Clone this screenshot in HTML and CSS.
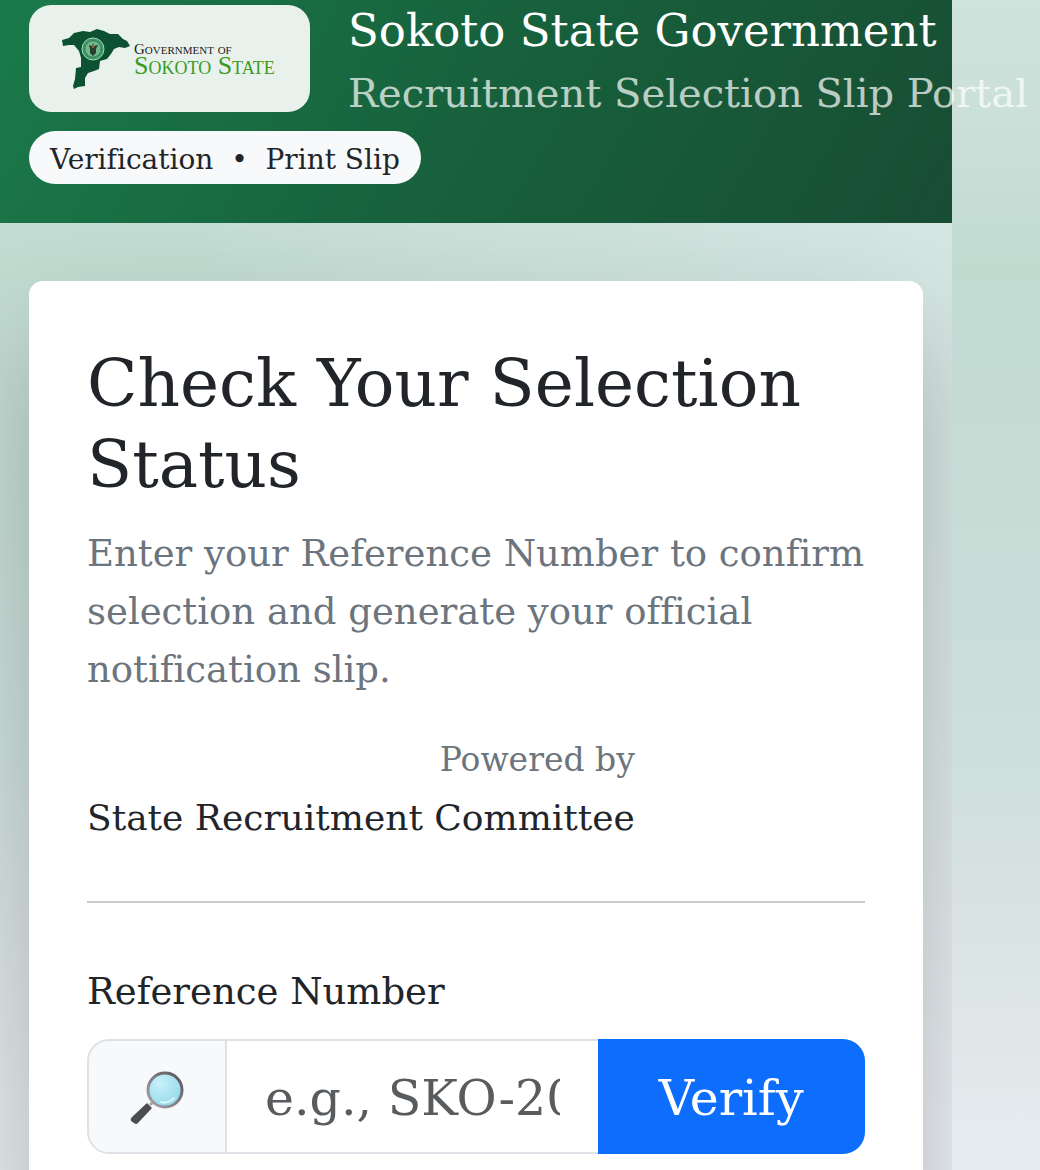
FILE: index.html
```html
<!DOCTYPE html>
<html lang="en">

<head>
    <meta charset="UTF-8">
    <meta name="viewport" content="width=device-width, initial-scale=1.0">
    <title>Sokoto State Government - Recruitment Selection Slip Portal</title>
    <link rel="stylesheet" href="styles.css">
</head>

<body>
    <div class="page">
        <header class="topbar">
            <div class="brand">
                <div class="logo">
                    <svg class="logo-map" viewBox="0 0 70 62" aria-hidden="true">
                        <path fill="#0b5132" d="M1 12 L8 10 L13 5 L22 3 L29 4 L36 1 L43 3 L49 6 L57 6 L62 11 L66 13 L69 18 L64 20 L58 19 L53 21 L50 26 L46 31 L39 33 L38 41 L33 43 L27 45 L24 50 L24 58 L17 59 L13 61 L12 58 L14 51 L15 40 L20 39 L20 30 L18 23 L13 17 L8 17 L2 18 Z" />
                        <circle cx="32" cy="21" r="11" fill="#3f9568" stroke="#a4d8b5" stroke-width="1" />
                        <circle cx="32" cy="21" r="8" fill="#6fb98c" stroke="#28754b" stroke-width="1" stroke-dasharray="2 1" />
                        <path fill="#25402f" d="M28 17 L31 18 L32 15 L33 18 L37 17 L35 21 L35 25 L32 28 L29 25 L29 21 Z" />
                        <path fill="#a55b43" d="M31 17 h2 v3 h-2 Z" />
                    </svg>
                    <div class="logo-text">
                        <span class="logo-gov">Government of</span>
                        <span class="logo-state">Sokoto State</span>
                    </div>
                </div>
                <div class="brand-text">
                    <div class="brand-title">Sokoto State Government</div>
                    <div class="brand-sub">Recruitment Selection Slip Portal</div>
                </div>
            </div>
            <div class="badge">Verification &nbsp;•&nbsp; Print Slip</div>
        </header>

        <main>
            <div class="card">
                <h1>Check Your Selection Status</h1>
                <p class="lead">Enter your Reference Number to confirm selection and generate your official notification slip.</p>
                <div class="powered">
                    <div class="powered-label">Powered by</div>
                    <div>State Recruitment Committee</div>
                </div>
                <hr>
                <form>
                    <label for="reference">Reference Number</label>
                    <div class="input-group">
                        <span class="input-icon">
                            <svg viewBox="0 0 56 56" aria-hidden="true">
                                <defs>
                                    <radialGradient id="glass" cx="35%" cy="30%" r="75%">
                                        <stop offset="0" stop-color="#c9f1fb" />
                                        <stop offset="1" stop-color="#93d9ea" />
                                    </radialGradient>
                                    <linearGradient id="rim" x1="0" y1="1" x2="1" y2="0">
                                        <stop offset="0" stop-color="#a9a5ad" />
                                        <stop offset="1" stop-color="#55535a" />
                                    </linearGradient>
                                </defs>
                                <path d="M21 36 L26 31" stroke="#aaa8ae" stroke-width="3" />
                                <path d="M18 34 L23 39 L9 54 Q7 56 5 54 L2 52 Q1 50 3 48 Z" fill="#4b4d50" />
                                <circle cx="36" cy="21" r="17" fill="url(#glass)" stroke="url(#rim)" stroke-width="3" />
                                <path d="M32 33 Q39 35 45 29" fill="none" stroke="#d8f6fc" stroke-width="2" stroke-linecap="round" />
                            </svg>
                        </span>
                        <input type="text" id="reference" name="reference" placeholder="e.g., SKO-2026-0001">
                        <button type="submit">Verify</button>
                    </div>
                </form>
            </div>
        </main>
    </div>
</body>

</html>
```
FILE: styles.css
```css
* {
    box-sizing: border-box;
}

body {
    margin: 0;
    font-family: "DejaVu Serif", serif;
    font-size: 36px;
    font-variant-ligatures: none;
    line-height: 58px;
    color: #212529;
    background: linear-gradient(180deg, #cfe3dd 0, #c9dfd7 150px, #c1dbd1 260px, #c6dcd5 500px, #cddfdc 750px, #d8e2e2 900px, #e4eaed 1120px);
    overflow-x: hidden;
}

.page {
    width: 91.5%;
    min-height: 100vh;
}

/* header */
.topbar {
    position: relative;
    padding: 5px 29px 39px;
    background: linear-gradient(120deg, #1b7a4b, #17633d 45%, #184d33);
}

.brand {
    display: flex;
    gap: 38px;
    margin-bottom: 2px;
}

.logo {
    flex: none;
    display: flex;
    align-items: center;
    gap: 3px;
    width: 281px;
    height: 107px;
    padding: 0 32px;
    border-radius: 22px;
    background: #e9f1ed;
}

.logo-map {
    flex: none;
    width: 70px;
    height: 62px;
}

.logo-text {
    display: flex;
    flex-direction: column;
    font-family: "Liberation Serif", serif;
    font-variant: small-caps;
    white-space: nowrap;
}

.logo-gov {
    font-size: 15px;
    line-height: 14px;
    color: #222;
}

.logo-state {
    font-size: 26px;
    line-height: 20px;
    color: #3a9a22;
}

.brand-text {
    white-space: nowrap;
    color: #fff;
}

.brand-title {
    font-size: 45px;
    line-height: 52px;
}

.brand-sub {
    font-size: 40px;
    line-height: 72px;
    opacity: 0.7;
}

.badge {
    width: fit-content;
    padding: 4px 21px 0;
    border-radius: 27px;
    background: #f8f9fa;
    font-size: 28px;
    line-height: 49px;
}

/* card */
main {
    padding: 58px 29px 0;
    overflow: hidden;
    background: linear-gradient(90deg, rgba(240, 243, 250, 0) 20%, rgba(240, 243, 250, 0.4));
}

.card {
    padding: 58px;
    border-radius: 14px 14px 0 0;
    background: #fff;
    box-shadow: 0 58px 110px rgba(0, 0, 0, 0.22);
}

h1 {
    margin: 4px 0 20px;
    font-size: 66px;
    font-weight: 400;
    line-height: 81px;
}

.lead {
    margin: 0 0 32px;
    font-size: 37px;
    color: #6c757d;
}

.powered {
    width: fit-content;
    text-align: right;
}

.powered-label {
    font-size: 33px;
    color: #6c757d;
}

hr {
    margin: 54px 0 60px;
    border: 0;
    border-top: 2px solid #c8cacb;
}

label {
    display: block;
    margin-bottom: 18px;
    font-size: 37px;
}

.input-group {
    display: flex;
    height: 115px;
}

.input-icon {
    flex: none;
    display: flex;
    align-items: center;
    justify-content: center;
    width: 140px;
    border: 2px solid #dee2e6;
    border-radius: 22px 0 0 22px;
    background: #f8f9fa;
}

.input-icon svg {
    width: 56px;
    height: 56px;
}

input {
    flex: 1;
    min-width: 0;
    padding: 4px 38px 0;
    border: solid #dee2e6;
    border-width: 2px 0;
    font: inherit;
    font-size: 49px;
    color: #212529;
    background: #fff;
}

input::placeholder {
    color: #595c5f;
    opacity: 1;
}

button {
    flex: none;
    padding: 4px 61px 0;
    border: 0;
    border-radius: 0 22px 22px 0;
    background: #0d6efd;
    color: #fff;
    font: inherit;
    font-size: 49px;
    cursor: pointer;
}
```
